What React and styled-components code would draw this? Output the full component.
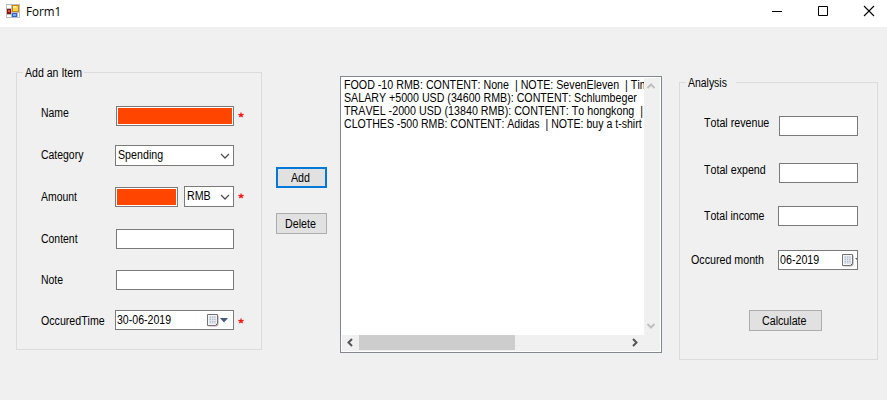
import React from "react";
import styled, { createGlobalStyle } from "styled-components";

const Global = createGlobalStyle`
  *, *::before, *::after { box-sizing: border-box; }
  body { margin: 0; background: #f0f0f0; }
  svg { display: block; flex: none; }
`;

const Window = styled.main`
  width: 887px;
  height: 400px;
  overflow: hidden;
  background: #f0f0f0;
  color: #000;
  font: 12px/14px "Liberation Sans", Arial, sans-serif;
  font-kerning: none;
`;

const Text = styled.span`
  display: inline-block;
  flex: none;
  white-space: pre;
  transform: scaleX(${(p) => p.$fit || 0.89});
  transform-origin: 0 0;
`;

const TitleBar = styled.header`
  display: flex;
  height: 27px;
  padding-left: 6px;
  background: #fff;
`;

const AppIcon = styled.svg`
  margin-top: 4px;
`;

const Title = styled.h1`
  margin: 3px 0 0 6px;
  font: 400 12px/17px "Open Sans", "Noto Sans", sans-serif;
  flex: 1;
`;

const WindowButtons = styled.div`
  display: flex;
  gap: 34px;
  padding: 5px 12px 0 0;
`;

const Body = styled.div`
  display: flex;
  align-items: flex-start;
  padding-left: 16px;
`;

const Group = styled.section`
  width: ${(p) => p.$width}px;
  height: 278px;
  margin-top: ${(p) => p.$top}px;
  border: 1px solid #dcdcdc;
`;

const Legend = styled.h2`
  width: ${(p) => p.$width}px;
  height: 14px;
  margin: -7px 0 0 ${(p) => p.$left}px;
  padding-left: 2px;
  background: #f0f0f0;
  font: inherit;
`;

const Form = styled.div`
  display: grid;
  grid-template-rows: ${(p) => p.$rows};
  padding-top: ${(p) => p.$top}px;
  padding-left: ${(p) => p.$left}px;
`;

const Row = styled.div`
  display: flex;
  align-items: flex-start;
`;

const Label = styled.label`
  flex: none;
  width: ${(p) => p.$width}px;
  padding-top: ${(p) => p.$drop || 0}px;
  padding-left: ${(p) => p.$indent || 0}px;
`;

const Field = styled.div`
  display: flex;
  flex: none;
  width: ${(p) => p.$width}px;
  height: ${(p) => p.$height || 20}px;
  margin-top: ${(p) => p.$drop || 0}px;
  margin-left: ${(p) => p.$indent || 0}px;
  padding: ${(p) => p.$pad || "1px"};
  overflow: hidden;
  border: 1px solid #7a7a7a;
  background: ${(p) => (p.$invalid ? "#ff4500" : "#fff")};
  box-shadow: ${(p) => (p.$invalid ? "inset 0 0 0 1px #fff" : "none")};
`;

const FieldText = styled.span`
  flex: 1;
  min-width: 0;
  white-space: nowrap;
`;

const Required = styled.svg`
  margin: ${(p) => p.$drop}px 0 0 4px;
`;

const Actions = styled.div`
  display: flex;
  flex-direction: column;
  gap: 25px;
  margin: 140px 13px 0 14px;
`;

const Button = styled.button`
  display: flex;
  width: ${(p) => p.$width}px;
  height: 21px;
  padding: ${(p) => (p.$primary ? 2 : 3)}px 0 0 ${(p) => p.$left}px;
  border: ${(p) => (p.$primary ? "2px solid #0078d7" : "1px solid #adadad")};
  border-radius: 0;
  background: #e1e1e1;
  color: #000;
  font: inherit;
  font-kerning: none;
`;

const ListBox = styled.section`
  display: grid;
  grid-template: 257px 16px / 302px 16px;
  flex: none;
  width: 322px;
  height: 277px;
  margin: 49px 17px 0 0;
  padding: 1px;
  border: 1px solid #828790;
  background: #fff;
`;

const Items = styled.ul`
  margin: 0;
  padding: 0 0 0 2px;
  overflow: hidden;
  list-style: none;
`;

const Item = styled.li`
  height: 13px;
`;

const VerticalBar = styled.div`
  display: flex;
  flex-direction: column;
  align-items: center;
  justify-content: space-between;
  padding: 4px 2px 5px 0;
  background: #f0f0f0;
`;

const HorizontalBar = styled.div`
  display: flex;
  grid-column: 1 / 3;
  padding-left: 4px;
  background: #f0f0f0;
`;

const Thumb = styled.div`
  width: 156px;
  height: 15px;
  margin: 0 116px 0 5px;
  background: #cdcdcd;
`;

const SideArrow = styled.svg`
  margin-top: 3px;
`;

const Glyph = styled.svg`
  margin: ${(p) => p.$m};
`;

function Star({ drop }) {
  return (
    <Required $drop={drop} width="6" height="6" viewBox="0 0 6 6">
      <path d="M3 .5v2.5M.4 2.4 3 3l2.6-.6M1.4 5 3 3l1.6 2" fill="none" stroke="#ff1414" strokeWidth="1.3" />
    </Required>
  );
}

function ComboArrow() {
  return (
    <Glyph $m="5px 3px 0 0" width="10" height="7" viewBox="0 0 10 7">
      <path d="M1 1l4 4 4-4" fill="none" stroke="#505050" strokeWidth="1.25" />
    </Glyph>
  );
}

function CalendarIcon() {
  return (
    <Glyph width="12" height="14" viewBox="0 0 12 14">
      <path d="M1.5 13.3h8l2-2V2.5" fill="none" stroke="#cfcfcf" />
      <path d="M.5 1.5h10v9l-2 2h-8z" fill="#f6f6f6" stroke="#796f74" />
      <path d="M2 3h7v7.5H2z" fill="#adb9ca" />
      <path d="M2 3h7.2M2 5.3h7M2 7.6h7M2 10h7M2.2 3v7.5M4.5 3v7.5M6.8 3v7.5M9 3v7" fill="none" stroke="#eef1f6" strokeWidth=".8" />
      <path d="M8 12.5 10.5 10v2.5z" fill="#66595e" />
    </Glyph>
  );
}

function DropTriangle() {
  return (
    <Glyph $m="5px 5px 0 1px" width="8" height="5" viewBox="0 0 8 5">
      <path d="M0 0h8L4 4.5z" fill="#44597b" />
    </Glyph>
  );
}

const records = [
  ["FOOD -10 RMB: CONTENT: None  | NOTE: SevenEleven  | Time", 0.89],
  ["SALARY +5000 USD (34600 RMB): CONTENT: Schlumbeger", 0.888],
  ["TRAVEL -2000 USD (13840 RMB): CONTENT: To hongkong  |", 0.892],
  ["CLOTHES -500 RMB: CONTENT: Adidas  | NOTE: buy a t-shirt", 0.881],
];

export default function App() {
  return (
    <Window>
      <Global />
      <TitleBar>
        <AppIcon width="14" height="14" viewBox="0 0 14 14">
          <path d="M0 0h14v14H0z" fill="#bdbdbd" />
          <path d="M1 1h4v3H1zM1 11h4v2H1z" fill="#fff" />
          <path d="M1 5h4v5H1z" fill="#8d1111" />
          <path d="M2 6h2v2H2z" fill="#d8584c" />
          <path d="M6 1h7v7H6z" fill="#c78a08" />
          <path d="M7 2h5v5H7z" fill="#ffd34c" />
          <path d="M7 2h3v2H7z" fill="#ffeb9a" />
          <path d="M6 9h5v4H6z" fill="#2f66cc" />
          <path d="M7 10h3v2H7z" fill="#7fabf2" />
          <path d="M12 9h1v4h-1z" fill="#fff" />
        </AppIcon>
        <Title><Text $fit={0.97}>Form1</Text></Title>
        <WindowButtons>
          <svg width="12" height="12"><path d="M1 6.5h10" stroke="#000" /></svg>
          <svg width="12" height="12"><path d="M1.5 1.5h9v9h-9z" fill="none" stroke="#000" /></svg>
          <svg width="12" height="12"><path d="M1 1l10 10M11 1 1 11" stroke="#000" strokeWidth="1.1" /></svg>
        </WindowButtons>
      </TitleBar>

      <Body>
        <Group $width={246} $top={45}>
          <Legend $left={6} $width={61}><Text $fit={0.88}>Add an Item</Text></Legend>
          <Form $top={26} $left={24} $rows="39px 41px 43px 41px 40px 20px">
            <Row>
              <Label $width={75}><Text $fit={0.87}>Name</Text></Label>
              <Field $width={118} $invalid />
              <Star drop={6} />
            </Row>
            <Row>
              <Label $width={74} $drop={3}><Text $fit={0.87}>Category</Text></Label>
              <Field $width={119} $height={21} $pad="2px 0 0 2px">
                <FieldText><Text>Spending</Text></FieldText>
                <ComboArrow />
              </Field>
            </Row>
            <Row>
              <Label $width={74} $drop={4}><Text $fit={0.87}>Amount</Text></Label>
              <Field $width={63} $drop={1} $invalid />
              <Field $width={50} $height={21} $indent={6} $pad="2px 0 0 2px">
                <FieldText><Text>RMB</Text></FieldText>
                <ComboArrow />
              </Field>
              <Star drop={7} />
            </Row>
            <Row>
              <Label $width={75} $drop={3}><Text $fit={0.87}>Content</Text></Label>
              <Field $width={118} />
            </Row>
            <Row>
              <Label $width={75} $drop={3}><Text $fit={0.87}>Note</Text></Label>
              <Field $width={118} />
            </Row>
            <Row>
              <Label $width={74} $drop={4}><Text $fit={0.885}>OccuredTime</Text></Label>
              <Field $width={119} $pad="2px 0 0 1px">
                <FieldText><Text $fit={0.88}>30-06-2019</Text></FieldText>
                <CalendarIcon />
                <DropTriangle />
              </Field>
              <Star drop={8} />
            </Row>
          </Form>
        </Group>

        <Actions>
          <Button $width={51} $primary $left={13}><Text>Add</Text></Button>
          <Button $width={51} $left={8}><Text>Delete</Text></Button>
        </Actions>

        <ListBox>
          <Items>
            {records.map(([text, fit]) => (
              <Item key={text}><Text $fit={fit}>{text}</Text></Item>
            ))}
          </Items>
          <VerticalBar>
            <svg width="10" height="8"><path d="M1.5 6 5 2.5 8.5 6" fill="none" stroke="#bfbfbf" strokeWidth="2" /></svg>
            <svg width="10" height="8"><path d="M1.5 2 5 5.5 8.5 2" fill="none" stroke="#bfbfbf" strokeWidth="2" /></svg>
          </VerticalBar>
          <HorizontalBar>
            <SideArrow width="8" height="9"><path d="M6 1 2.5 4.5 6 8" fill="none" stroke="#555" strokeWidth="2" /></SideArrow>
            <Thumb />
            <SideArrow width="8" height="9"><path d="M2 1l3.5 3.5L2 8" fill="none" stroke="#555" strokeWidth="2" /></SideArrow>
          </HorizontalBar>
        </ListBox>

        <Group $width={199} $top={55}>
          <Legend $left={6} $width={50}><Text $fit={0.87}>Analysis</Text></Legend>
          <Form $top={26} $left={11} $rows="47px 43px 44px 60px 21px">
            <Row>
              <Label $width={88} $indent={13}><Text>Total revenue</Text></Label>
              <Field $width={79} />
            </Row>
            <Row>
              <Label $width={88} $indent={13}><Text>Total expend</Text></Label>
              <Field $width={79} />
            </Row>
            <Row>
              <Label $width={87} $indent={13} $drop={3}><Text $fit={0.88}>Total income</Text></Label>
              <Field $width={80} />
            </Row>
            <Row>
              <Label $width={87} $drop={3}><Text>Occured month</Text></Label>
              <Field $width={80} $pad="2px 0 0 1px">
                <FieldText><Text>06-2019</Text></FieldText>
                <CalendarIcon />
                <Glyph $m="5px 0 0 1px" width="2" height="5"><path d="M0 0h2v2z" fill="#44597b" /></Glyph>
              </Field>
            </Row>
            <Row>
              <Label $width={58} />
              <Button $width={73} $left={12}><Text>Calculate</Text></Button>
            </Row>
          </Form>
        </Group>
      </Body>
    </Window>
  );
}
